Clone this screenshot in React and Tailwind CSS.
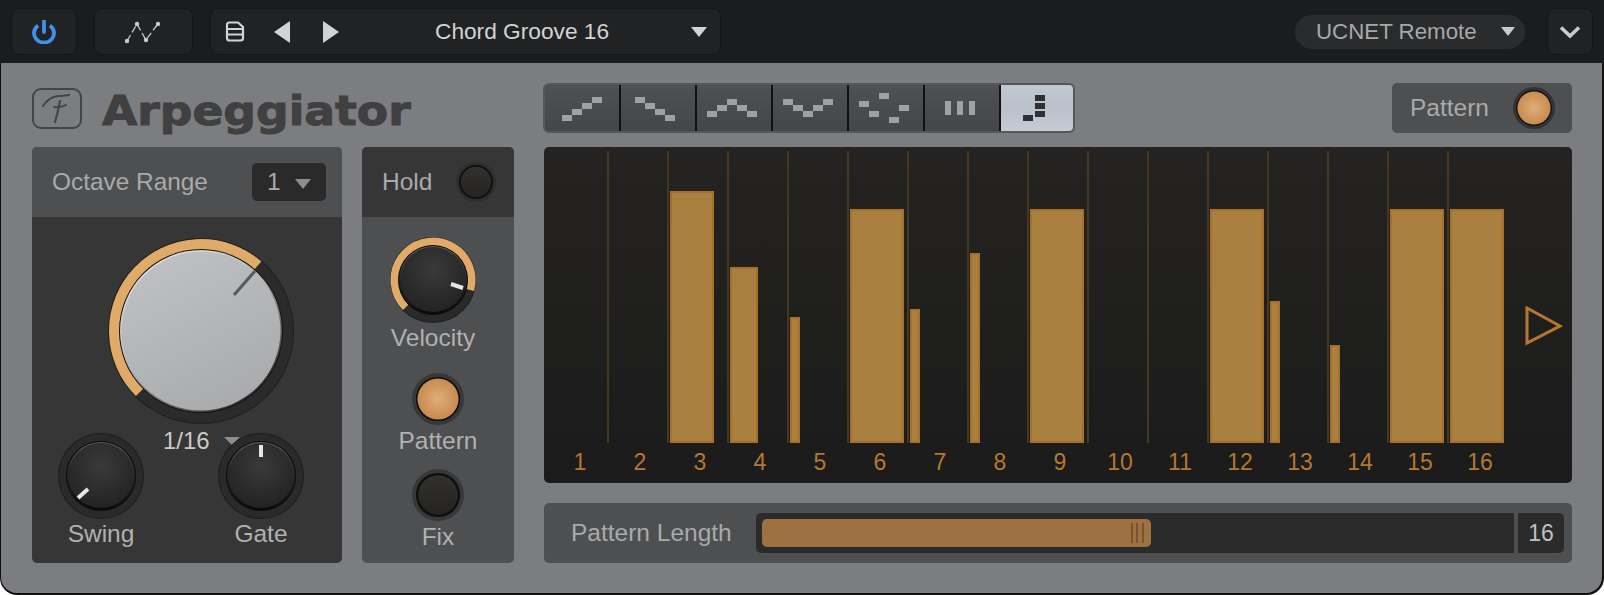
const sans = "font-['Liberation_Sans',Arial,sans-serif]"

// angle 0 = top, clockwise
const pt = (r, a, c) => {
  const t = (a * Math.PI) / 180
  return [c + r * Math.sin(t), c - r * Math.cos(t)]
}
const arc = (r, a0, a1, c) => {
  const [x0, y0] = pt(r, a0, c)
  const [x1, y1] = pt(r, a1, c)
  return `M${x0} ${y0}A${r} ${r} 0 ${a1 - a0 > 180 ? 1 : 0} 1 ${x1} ${y1}`
}

function BigKnob() {
  const c = 93
  return (
    <svg width="186" height="186" className="block">
      <defs>
        <linearGradient id="bk" x1="0.2" y1="0" x2="0.7" y2="1">
          <stop offset="0" stopColor="#c0c1c3" />
          <stop offset="1" stopColor="#a9aaac" />
        </linearGradient>
        <linearGradient id="bke" x1="0.15" y1="0.05" x2="0.8" y2="0.95">
          <stop offset="0" stopColor="#e6e7e8" />
          <stop offset="0.45" stopColor="#b5b6b8" />
          <stop offset="1" stopColor="#26262a" />
        </linearGradient>
      </defs>
      <circle cx={c} cy={c} r="93" fill="#1f1f20" />
      <circle cx={c} cy={c} r="86.5" fill="none" stroke="#2b2b2c" strokeWidth="11" />
      <path d={arc(86.5, -135, 41, c)} fill="none" stroke="#e0aa68" strokeWidth="11" />
      <circle cx={c} cy={c} r="82" fill="#141414" />
      <circle cx={c} cy={c} r="81" fill="url(#bke)" />
      <circle cx={c} cy={c} r="79.5" fill="url(#bk)" />
      <line x1={c + 33} y1={c - 36} x2={c + 54} y2={c - 60} stroke="#58595a" strokeWidth="3" />
    </svg>
  )
}

function SmallKnob({ from, to, range }) {
  const c = 43
  return (
    <svg width="86" height="86" className="block">
      <defs>
        <radialGradient id="sk" cx="0.5" cy="0.35" r="0.7">
          <stop offset="0" stopColor="#3a3a3a" />
          <stop offset="1" stopColor="#212121" />
        </radialGradient>
        <linearGradient id="ske" x1="0.5" y1="0" x2="0.5" y2="1">
          <stop offset="0" stopColor="#5c5c5c" />
          <stop offset="0.45" stopColor="#2a2a2a" />
          <stop offset="1" stopColor="#0a0a0a" />
        </linearGradient>
      </defs>
      <circle cx={c} cy={c} r="43" fill="#1d1d1e" />
      <circle cx={c} cy={c} r="38.5" fill="none" stroke="#2a2a2b" strokeWidth="7" />
      {range && <path d={arc(38.5, range[0], range[1], c)} fill="none" stroke="#e0aa68" strokeWidth="8" />}
      <circle cx={c} cy={c} r="35" fill="#0c0c0c" />
      <circle cx={c} cy={c} r="34" fill="url(#ske)" />
      <circle cx={c} cy={c - 0.5} r="32.5" fill="url(#sk)" />
      <line x1={c + from[0]} y1={c + from[1]} x2={c + to[0]} y2={c + to[1]} stroke="#e6e6e6" strokeWidth="4" />
    </svg>
  )
}

function Led({ size = 52, on, ring = '#37383a' }) {
  const c = size / 2
  return (
    <svg width={size} height={size} className="block shrink-0">
      <defs>
        <radialGradient id="ledon">
          <stop offset="0" stopColor="#dfae7a" />
          <stop offset="1" stopColor="#c88b4f" />
        </radialGradient>
        <linearGradient id="ledoff" x1="0.5" y1="0" x2="0.5" y2="1">
          <stop offset="0" stopColor="#33312d" />
          <stop offset="1" stopColor="#242321" />
        </linearGradient>
      </defs>
      <circle cx={c} cy={c} r={c} fill={ring} />
      <circle cx={c} cy={c} r={c * 0.85} fill="#0e0e0e" />
      <circle cx={c} cy={c} r={c * (on ? 0.79 : 0.76)} fill={on ? 'url(#ledon)' : 'url(#ledoff)'} />
    </svg>
  )
}

const TABS = [
  [[19, 32], [29, 26], [39, 20], [49, 14]],
  [[16, 14], [26, 20], [36, 26], [46, 32]],
  [[12, 28], [22, 22], [32, 16], [42, 22], [52, 28]],
  [[12, 16], [22, 22], [32, 28], [42, 22], [52, 16]],
  [[12, 18], [22, 28], [32, 10], [42, 34], [52, 22]],
]

function PatternTabs() {
  return (
    <div className="flex h-[50px] w-[532px] overflow-hidden rounded-[6px] border-2 border-[#56575a] bg-linear-to-b from-[#505153] via-[#4a4b4d] to-[#454648]">
      {TABS.map((cells, i) => (
        <div key={i} className="h-full w-[76px] shrink-0 border-r-2 border-[#111]">
          <svg width="74" height="46" viewBox="0 2 74 46" className="block">
            {cells.map(([x, y]) => <rect key={x} x={x - 2} y={y} width="10" height="6" fill="#a0a1a2" />)}
          </svg>
        </div>
      ))}
      <div className="h-full w-[76px] shrink-0 border-r-2 border-[#111]">
        <svg width="74" height="46" viewBox="0 2 74 46" className="block">
          {[20, 32, 44].map(x => <rect key={x} x={x} y="18" width="6" height="14" fill="#a0a1a2" />)}
        </svg>
      </div>
      <div className="h-full flex-1 bg-linear-to-b from-[#c2c8d1] via-[#b9c0ca] to-[#c6ccd4]">
        <svg width="74" height="46" viewBox="0 2 74 46" className="block">
          <rect x="22" y="32" width="10" height="6" fill="#2e3033" />
          <rect x="34" y="12" width="10" height="6" fill="#2e3033" />
          <rect x="34" y="20" width="10" height="6" fill="#2e3033" />
          <rect x="34" y="28" width="10" height="6" fill="#2e3033" />
        </svg>
      </div>
    </div>
  )
}

const BARS = {
  3: 'w-[44px] h-[252px]',
  4: 'w-[28px] h-[176px]',
  5: 'w-[10px] h-[126px]',
  6: 'w-[54px] h-[234px]',
  7: 'w-[10px] h-[134px]',
  8: 'w-[10px] h-[190px]',
  9: 'w-[54px] h-[234px]',
  12: 'w-[54px] h-[234px]',
  13: 'w-[10px] h-[142px]',
  14: 'w-[10px] h-[98px]',
  15: 'w-[54px] h-[234px]',
  16: 'w-[54px] h-[234px]',
}
const STEPS = Array.from({ length: 16 }, (_, i) => i + 1)

function Sequencer() {
  return (
    <div className="h-[336px] rounded-[5px] bg-linear-to-b from-[#242321] to-[#1b1b1b] pl-[3px] pt-[4px]">
      <div className="flex h-[292px]">
        {STEPS.map(n => (
          <div key={n} className={`flex h-full w-[60px] shrink-0 items-end border-l-2 ${n === 1 ? 'border-transparent' : 'border-[#46371f]'}`}>
            {BARS[n] && <div className={`ml-px border-2 border-[#a66f2a] bg-[#a98040] ${BARS[n]}`} />}
          </div>
        ))}
        <svg width="38" height="40" viewBox="0 0 38 40" className="ml-[18px] mt-[155px] shrink-0">
          <path d="M2 2L35 20L2 37Z" fill="none" stroke="#b5782e" strokeWidth="3" />
        </svg>
      </div>
      <div className="flex">
        {STEPS.map(n => (
          <div key={n} className="w-[60px] shrink-0 pl-[6px] text-center text-[23px] leading-[38px] text-[#b5782e]">{n}</div>
        ))}
      </div>
    </div>
  )
}

function TopBar() {
  return (
    <div className="flex h-[63px] items-center bg-[#1b1c1e] pl-[11px]">
      <div className="flex h-[47px] w-[66px] items-center justify-center rounded-[8px] border border-[#151618] bg-[#212224]">
        <svg width="26" height="24" viewBox="0 0 26 24" fill="none" stroke="#4090ee" strokeWidth="3.8">
          <path d="M7 5.5A10 9.5 0 1 0 19 5.5" />
          <path d="M13 1V12" strokeLinecap="round" />
        </svg>
      </div>
      <div className="ml-[17px] flex h-[47px] w-[99px] items-center justify-center rounded-[8px] border border-[#151618] bg-[#212224]">
        <svg width="40" height="24" viewBox="0 0 40 24" fill="none" stroke="#c4c5c6" strokeWidth="1.3">
          <path d="M3 21L13 4L22 20L33 5" strokeDasharray="7 3" />
          <g fill="#c9cacb" stroke="none">
            <circle cx="3" cy="21" r="2.2" />
            <circle cx="13" cy="4" r="2.2" />
            <circle cx="22" cy="20" r="2.2" />
            <circle cx="34" cy="4" r="2.2" />
          </g>
        </svg>
      </div>
      <div className="ml-[17px] flex h-[47px] w-[511px] items-center rounded-[8px] border border-[#151618] bg-[#212224] pl-[14px]">
        <svg width="20" height="21" viewBox="0 0 20 21" fill="none" stroke="#d2d3d4" strokeWidth="2.2">
          <path d="M2 4Q2 1.5 4.5 1.5H13L18 6V17Q18 19.5 15.5 19.5H4.5Q2 19.5 2 17Z" />
          <path d="M2 8H18M2 13.5H18" />
        </svg>
        <svg width="16" height="22" viewBox="0 0 16 22" className="ml-[29px]"><path d="M16 0V22L0 11Z" fill="#d2d3d4" /></svg>
        <svg width="16" height="22" viewBox="0 0 16 22" className="ml-[33px]"><path d="M0 0V22L16 11Z" fill="#d2d3d4" /></svg>
        <span className="ml-[96px] w-[256px] text-[22.7px] text-[#d2d3d4]">Chord Groove 16</span>
        <svg width="16" height="10" viewBox="0 0 16 10"><path d="M0 0H16L8 10Z" fill="#d2d3d4" /></svg>
      </div>
      <div className="ml-auto flex h-[34px] w-[230px] items-center rounded-full bg-[#2a2b2d] pl-[21px]">
        <span className="w-[185px] text-[22.3px] text-[#a7a8a9]">UCNET Remote</span>
        <svg width="14" height="9" viewBox="0 0 14 9"><path d="M0 0H14L7 9Z" fill="#c9cacb" /></svg>
      </div>
      <div className="ml-[22px] mr-[11px] flex h-[47px] w-[46px] items-center justify-center rounded-[8px] border border-[#151618] bg-[#212224]">
        <svg width="22" height="14" viewBox="0 0 22 14" fill="none" stroke="#c9cacb" strokeWidth="3.6">
          <path d="M2 2.5L11 11L20 2.5" />
        </svg>
      </div>
    </div>
  )
}

function OctavePanel() {
  return (
    <div className="h-[416px] w-[310px] shrink-0 overflow-hidden rounded-[5px] bg-[#363636]">
      <div className="flex h-[70px] items-center bg-[#4e4f51] pl-[20px] pr-[16px] text-[24.4px] text-[#a9aaab]">
        Octave Range
        <div className="ml-auto flex h-[38px] w-[74px] items-center rounded-[5px] bg-[#2a2a2a] pl-[15px] text-[#a9aaab]">
          1
          <svg width="16" height="10" viewBox="0 0 16 10" className="ml-[14px] mt-[3px]"><path d="M0 0H16L8 10Z" fill="#8c8d8e" /></svg>
        </div>
      </div>
      <div className="ml-[76px] mt-[21px] w-[186px]">
        <BigKnob />
      </div>
      <div className="ml-[26px] mt-[9px] flex">
        <div className="flex w-[86px] flex-col items-center">
          <SmallKnob from={[-23, 22]} to={[-13, 13]} />
          <span className="mt-px text-[24.5px] leading-[28px] text-[#b0b1b2]">Swing</span>
        </div>
        <div className="flex h-[16px] w-[74px] shrink-0 items-center pl-[19px] text-[24px] leading-none text-[#c9c9c9]">
          1/16
          <svg width="16" height="8" viewBox="0 0 16 8" className="ml-[14px] shrink-0"><path d="M0 0H16L8 8Z" fill="#8c8d8e" /></svg>
        </div>
        <div className="relative flex w-[86px] flex-col items-center">
          <SmallKnob from={[0, -31]} to={[0, -19]} />
          <span className="mt-px text-[24.5px] leading-[28px] text-[#b0b1b2]">Gate</span>
        </div>
      </div>
    </div>
  )
}

function HoldPanel() {
  return (
    <div className="ml-[20px] h-[416px] w-[152px] shrink-0 overflow-hidden rounded-[5px] bg-[#4e4f51]">
      <div className="flex h-[70px] items-center bg-[#363636] pl-[20px] text-[24.5px] text-[#a9aaab]">
        Hold
        <div className="ml-[24px]"><Led size={40} ring="#2e2e2f" /></div>
      </div>
      <div className="flex flex-col items-center text-[24.5px] leading-[28px] text-[#b0b1b2]">
        <div className="flex flex-col items-center pr-[10px] pt-[20px]">
          <SmallKnob from={[18, 4]} to={[30, 8]} range={[-135, 105]} />
          <span className="mt-px">Velocity</span>
        </div>
        <div className="mt-[21px]"><Led on /></div>
        <span className="mt-[2px]">Pattern</span>
        <div className="mt-[14px]"><Led /></div>
        <span className="mt-[2px]">Fix</span>
      </div>
    </div>
  )
}

function LengthBar() {
  return (
    <div className="mt-[20px] flex h-[60px] items-center rounded-[5px] bg-[#4e4f51] pl-[27px] pr-[8px]">
      <span className="w-[185px] shrink-0 text-[24.5px] text-[#a9aaab]">Pattern Length</span>
      <div className="flex h-[40px] w-[758px] shrink-0 items-center rounded-l-[5px] bg-[#2b2b2b] pl-[6px]">
        <div className="flex h-[28px] w-[389px] items-center justify-end gap-[3.6px] rounded-[5px] bg-[#9e7142] pr-[7px]">
          <div className="h-[20px] w-[2px] bg-[#76552f]" />
          <div className="h-[20px] w-[2px] bg-[#76552f]" />
          <div className="h-[20px] w-[2px] bg-[#76552f]" />
        </div>
      </div>
      <div className="ml-[4px] flex h-[40px] w-[46px] shrink-0 items-center justify-center rounded-r-[5px] bg-[#2b2b2b] text-[23px] text-[#bfc0c1]">16</div>
    </div>
  )
}

export default function App() {
  return (
    <div className={`h-[595px] w-[1604px] overflow-hidden bg-white ${sans}`}>
      <div className="h-[595px] overflow-hidden rounded-b-[17px] bg-[#101011]">
        <TopBar />
        <div className="ml-[1px] mr-[2px] h-[530px] rounded-b-[16px] bg-[#7c7d80] pl-[31px] pr-[30px] pt-[20px]">
          <div className="flex h-[50px] items-center">
            <div className="flex w-[511px] shrink-0 items-center">
              <svg width="50" height="41" viewBox="0 0 50 41" fill="none" stroke="#444546" className="shrink-0">
                <rect x="1" y="1" width="48" height="39" rx="8" strokeWidth="2" />
                <path d="M11 18Q17 9 26 8Q32 8 37 7" strokeWidth="2.2" strokeLinecap="round" />
                <path d="M28 13Q26 24 23 34" strokeWidth="2.2" strokeLinecap="round" />
                <path d="M22 19Q29 20 34 17" strokeWidth="2" strokeLinecap="round" />
              </svg>
              <span className="ml-[20px] mt-[5px] origin-left scale-x-[1.14] font-['DejaVu_Sans',sans-serif] text-[40px] font-bold leading-none text-[#404041] [-webkit-text-stroke:1px_#404041]">Arpeggiator</span>
            </div>
            <PatternTabs />
            <div className="ml-auto flex h-[50px] w-[180px] items-center rounded-[5px] bg-[#4e4f51] pl-[18px] text-[24.5px] text-[#a9aaab]">
              Pattern
              <div className="ml-[24px]"><Led size={42} on ring="#323335" /></div>
            </div>
          </div>
          <div className="mt-[14px] flex">
            <OctavePanel />
            <HoldPanel />
            <div className="ml-[30px] flex-1">
              <Sequencer />
              <LengthBar />
            </div>
          </div>
        </div>
      </div>
    </div>
  )
}
